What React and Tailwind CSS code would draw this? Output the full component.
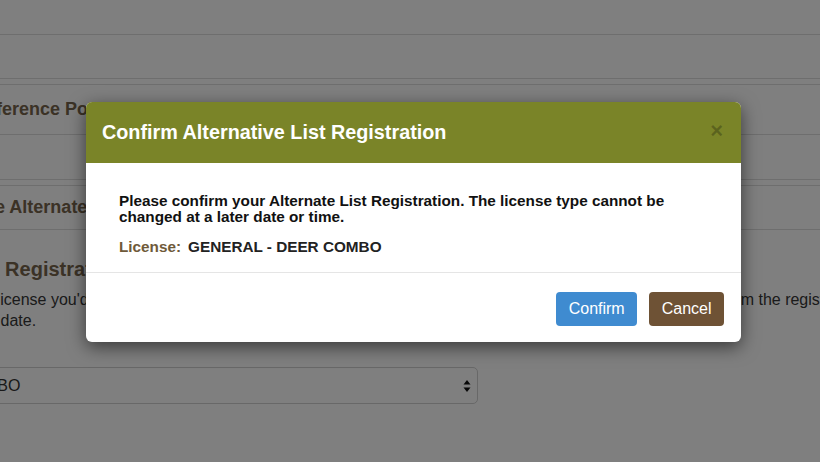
import React from 'react';

const font = "font-['Liberation_Sans',Arial,sans-serif]";

function SelectArrows() {
  return (
    <svg width="8" height="14" viewBox="0 0 8 14" className="shrink-0">
      <path d="M4 1 L7.5 5.5 L0.5 5.5 Z" fill="#111" />
      <path d="M4 13 L7.5 8.5 L0.5 8.5 Z" fill="#111" />
    </svg>
  );
}

function BackgroundPage() {
  return (
    <div className="w-[820px] h-[462px] bg-white">
      <div className="-ml-[48px] w-[1000px]">
        <div className="h-[35px] border-b border-[#dcdcdc]" />
        <div className="h-[44px] border-b border-[#dcdcdc]" />

        <div className="mt-[5px] border-t border-[#dcdcdc]">
          <div className="h-[50px] border-b border-[#dcdcdc] flex items-center pl-[15px] text-[18px] font-bold text-[#76644c]">
            Preference Points
          </div>
          <div className="h-[45px] border-b border-[#dcdcdc]" />
        </div>

        <div className="mt-[5px] border-t border-[#dcdcdc]">
          <div className="h-[44px] border-b border-[#dcdcdc] flex items-center pl-[15px] text-[18px] font-bold text-[#76644c]">
            <span className="-ml-[7px]">Make Alternate List Selection</span>
          </div>
        </div>

        <div className="pl-[19px] pt-[27px]">
          <h3 className="text-[20px] font-bold leading-[24px] text-[#76644c]">
            <span className="-ml-[7px]">List Registration</span>
          </h3>
          <div className="mt-[8px] text-[16px] leading-[21px] text-[#363636]">
            <div className="flex whitespace-nowrap -ml-[1px]">
              <span className="w-[748px] overflow-hidden">the license you'd like to be placed on for the alternate list below. Once confirmed it cannot be removed</span>
              <span className="ml-[4px]">from the registration list.</span>
            </div>
            <div className="whitespace-nowrap -ml-[6px]">later date.</div>
          </div>
        </div>
      </div>

      <div className="mt-[36px] -ml-[192px] w-[670px] h-[37px] rounded-[5px] border border-[#d0d0d0] flex items-center justify-between pl-[12px] pr-[6px] text-[16px] text-[#333]">
        <span>GENERAL - DEER COMBO</span>
        <SelectArrows />
      </div>
    </div>
  );
}

export default function App() {
  return (
    <div className={`relative w-[820px] h-[462px] overflow-hidden ${font}`}>
      <BackgroundPage />

      <div className="absolute inset-0 bg-black/50 pt-[102px] pl-[86px]">
        <div className="w-[655px] rounded-[6px] bg-white overflow-hidden shadow-[0_5px_18px_rgba(0,0,0,0.55)]">
          <div className="h-[61px] bg-[#7a8428] flex items-center justify-between pl-[16px] pr-[18px]">
            <h2 className="text-[19.8px] font-bold text-white leading-none mt-[1px]">Confirm Alternative List Registration</h2>
            <span className="text-[22px] font-bold leading-none text-black/25 -mt-[4px]">×</span>
          </div>

          <div className="px-[33px] pt-[30px] pb-[17px] border-b border-[#e5e5e5]">
            <p className="text-[15.3px] font-bold leading-[16px] text-[#111]">
              Please confirm your Alternate List Registration. The license type cannot be changed at a later date or time.
            </p>
            <div className="mt-[14px] flex text-[15.3px] font-bold leading-[16px]">
              <span className="text-[#6f5a3a]">License:</span>
              <span className="ml-[7px] text-[#222]">GENERAL - DEER COMBO</span>
            </div>
          </div>

          <div className="h-[69px] flex items-center justify-end gap-[12px] pr-[17px] pt-[2px]">
            <button className="h-[34px] px-[12.5px] rounded-[4px] bg-[#3f8bd0] text-white text-[16px]">Confirm</button>
            <button className="h-[34px] px-[12.5px] rounded-[4px] bg-[#6e5235] text-white text-[16px]">Cancel</button>
          </div>
        </div>
      </div>
    </div>
  );
}
